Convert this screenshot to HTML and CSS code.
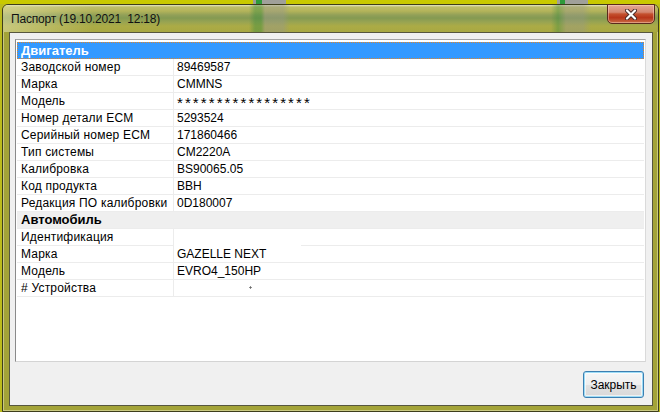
FILE: index.html
```html
<!DOCTYPE html>
<html lang="ru">
<head>
<meta charset="utf-8">
<title>Паспорт</title>
<link rel="stylesheet" href="styles.css">
</head>
<body>
<div class="strip"></div>
<div class="window">
  <div class="titlebar">
    <span class="title">Паспорт (19.10.2021&nbsp; 12:18)</span>
    <button class="close" aria-label="Закрыть">
      <svg width="12" height="11" viewBox="0 0 12 11">
        <path d="M2 1.5 L10 9.5 M10 1.5 L2 9.5" stroke="#4a2a28" stroke-width="4" stroke-linecap="round"/>
        <path d="M2 1.5 L10 9.5 M10 1.5 L2 9.5" stroke="#ffffff" stroke-width="2.2" stroke-linecap="round"/>
      </svg>
    </button>
  </div>
  <div class="client">
    <div class="list">
      <div class="head">Двигатель</div>
      <div class="row"><span class="k">Заводской номер</span><span class="v">89469587</span></div>
      <div class="row"><span class="k">Марка</span><span class="v">CMMNS</span></div>
      <div class="row"><span class="k">Модель</span><span class="v stars">*****************</span></div>
      <div class="row"><span class="k">Номер детали ECM</span><span class="v">5293524</span></div>
      <div class="row"><span class="k">Серийный номер ECM</span><span class="v">171860466</span></div>
      <div class="row"><span class="k">Тип системы</span><span class="v">CM2220A</span></div>
      <div class="row"><span class="k">Калибровка</span><span class="v">BS90065.05</span></div>
      <div class="row"><span class="k">Код продукта</span><span class="v">BBH</span></div>
      <div class="row"><span class="k">Редакция ПО калибровки</span><span class="v">0D180007</span></div>
      <div class="group">Автомобиль</div>
      <div class="row"><span class="k">Идентификация</span><span class="v gap"></span></div>
      <div class="row"><span class="k">Марка</span><span class="v">GAZELLE NEXT</span></div>
      <div class="row"><span class="k">Модель</span><span class="v">EVRO4_150HP</span></div>
      <div class="row"><span class="k">#&nbsp;Устройства</span><span class="v erased"></span></div>
    </div>
    <div class="actions">
      <button class="btn">Закрыть</button>
    </div>
  </div>
</div>
</body>
</html>
```

FILE: styles.css
```css
html, body {
  margin: 0;
  height: 412px;
  overflow: hidden;
}
body {
  background: #bcbc1c;
  font-family: "Liberation Sans", Arial, sans-serif;
  font-size: 12px;
  color: #000;
}
.strip {
  height: 4px;
  background: linear-gradient(to right,
    #c9c900 0, #c9c900 253px,
    #9c9c94 253px, #9c9c94 256px,
    #2e9a3a 256px, #2e9a3a 262px,
    #a0a09a 262px, #a0a09a 286px,
    #c9c900 286px, #c9c900 557px,
    #a0a09a 557px, #a0a09a 560px,
    #2e9a3a 560px, #2e9a3a 565px,
    #a0a09a 565px, #a0a09a 588px,
    #c9c900 588px);
}
.window {
  margin-left: 2px;
  width: 657px;
  height: 408px;
  box-sizing: border-box;
  border: 1px solid #3e3e1c;
  border-radius: 6px 6px 0 0;
  background: #a3a338;
  box-shadow: inset 0 0 0 1px rgba(235, 235, 190, 0.55);
  display: flex;
  flex-direction: column;
}
.titlebar {
  height: 27px;
  flex: none;
  display: flex;
  justify-content: space-between;
  align-items: flex-start;
  border-radius: 5px 5px 0 0;
  background:
    linear-gradient(to right,
      rgba(60,140,60,0) 246px, rgba(60,140,60,0.45) 252px, rgba(60,140,60,0.45) 258px,
      rgba(150,150,140,0.45) 262px, rgba(150,150,140,0.45) 280px, rgba(150,150,140,0) 287px,
      rgba(60,140,60,0) 548px, rgba(60,140,60,0.4) 555px,
      rgba(150,150,140,0.4) 563px, rgba(150,150,140,0.4) 580px, rgba(150,150,140,0) 588px),
    linear-gradient(to right, rgba(225,225,170,0.55) 0, rgba(225,225,170,0) 90px),
    linear-gradient(to bottom,
      #e6e6c4 0, #bdbd6a 2px, #b4b45a 6px, #92a058 10px, #849a52 13px,
      #98a452 17px, #abab46 21px, #a8a842 100%);
}
.title {
  margin-top: 7px;
  padding-left: 8px;
  line-height: 15px;
  font-size: 12px;
  letter-spacing: -0.2px;
  color: #111;
  white-space: nowrap;
}
.close {
  margin: -1px 3px 0 0;
  width: 48px;
  height: 20px;
  padding: 0;
  border: 1px solid #5a2a1c;
  border-radius: 0 0 5px 5px;
  background: linear-gradient(to bottom,
    #e4a894 0, #d48670 40%, #c4502e 50%, #b8361a 70%, #c86a44 100%);
  box-shadow: inset 0 0 0 1px rgba(255, 220, 200, 0.45);
  display: flex;
  align-items: center;
  justify-content: center;
}
.close svg {
  display: block;
}
.client {
  flex: 1;
  margin: 0 5px 5px 6px;
  border: 1px solid #56563e;
  background: #f0f0f0;
  padding: 6px 6px 7px 5px;
  display: flex;
  flex-direction: column;
}
.list {
  height: 323px;
  box-sizing: border-box;
  border: 1px solid;
  border-color: #a4a4a4 #dadada #d4d4d4 #8a8a8a;
  background: #fff;
  padding: 2px 1px 0 1px;
}
.head {
  height: 17px;
  box-sizing: border-box;
  background: #3399ff;
  border: 1px dotted #e0862a;
  color: #fff;
  font-weight: bold;
  font-size: 13px;
  padding-left: 3px;
  line-height: 15px;
}
.group {
  height: 17px;
  box-sizing: border-box;
  background: #efefef;
  border-bottom: 1px solid #ececec;
  font-weight: bold;
  font-size: 13px;
  padding-left: 4px;
  line-height: 16px;
}
.row {
  display: grid;
  grid-template-columns: 157px 1fr;
  height: 17px;
}
.k, .v {
  box-sizing: border-box;
  border-bottom: 1px solid #ececec;
  line-height: 16px;
  white-space: nowrap;
  overflow: hidden;
}
.k {
  padding-left: 4px;
  letter-spacing: 0.2px;
  border-right: 1px solid #ececec;
}
.v {
  padding-left: 3px;
}
.v.stars {
  font-size: 15px;
  letter-spacing: 2.1px;
  line-height: 19px;
}
.v.gap {
  border-bottom-color: transparent;
  background: linear-gradient(#ececec, #ececec) no-repeat right bottom / calc(100% - 127px) 1px;
  background-origin: border-box;
}
.v.erased {
  background: radial-gradient(circle, #6a6a6a 0.9px, rgba(0,0,0,0) 1.3px) no-repeat 75px 6px / 3px 3px;
}
.actions {
  margin-top: 9px;
  display: flex;
  justify-content: flex-end;
}
.btn {
  margin-right: 2px;
  width: 61px;
  height: 27px;
  padding: 0;
  border: 1px solid #3c7fb1;
  border-radius: 3px;
  background: linear-gradient(to bottom, #f6f6f6 0, #eeeeee 50%, #e2e2e2 51%, #d8d8d8 100%);
  box-shadow: inset 0 0 0 1px #9ddcf6, inset 0 0 0 2px rgba(255,255,255,0.6);
  font-family: "Liberation Sans", Arial, sans-serif;
  font-size: 12px;
  color: #000;
}
```
